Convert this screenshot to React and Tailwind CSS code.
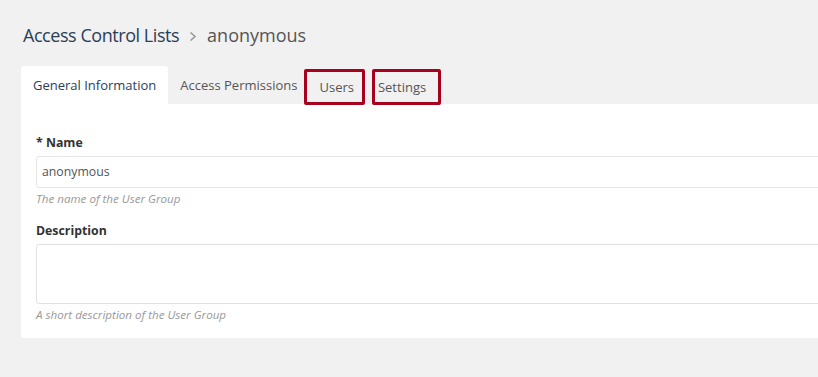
export default function App() {
  return (
    <div
      className="h-[377px] w-full overflow-hidden bg-[#f1f1f1]"
      style={{ fontFamily: '"Open Sans", "Noto Sans", sans-serif' }}
    >
      <div className="pl-[21px] pt-[22px]">
        <h1 className="flex items-center pl-[2px] text-[18px] leading-[26px]">
          <span className="tracking-[-0.45px] text-[#2b3e58]">Access Control Lists</span>
          <svg className="mx-[10px] mt-[2px]" width="8" height="11" viewBox="0 0 8 11">
            <path d="M1.5 1.5 L6 5.5 L1.5 9.5" fill="none" stroke="#999" strokeWidth="1.6" />
          </svg>
          <span className="text-[#555]">anonymous</span>
        </h1>
        <div className="mt-[18px] flex items-end text-[13px]">
          <div className="flex h-[38px] items-center rounded-t-[3px] bg-white px-[12px] pt-[2px] text-[#2b3e58]">
            General Information
          </div>
          <div className="flex h-[38px] items-center pl-[12px] pr-[7px] pt-[2px] text-[#555]">Access Permissions</div>
          <div className="mb-[-1px] flex h-[36px] items-center rounded-[2px] border-[3px] border-[#a8001f] pl-[12px] pr-[8px] pt-[1px] text-[#555]">
            Users
          </div>
          <div className="mb-[-1px] ml-[7px] flex h-[36px] items-center rounded-[2px] border-[3px] border-[#a8001f] pl-[3px] pr-[12px] pt-[1px] text-[#555]">
            Settings
          </div>
        </div>
        <div className="w-[840px] rounded-b-[3px] bg-white pl-[15px] pt-[30px] pb-[15px]">
          <div className="text-[12.3px] font-bold leading-[18px] text-[#333]">* Name</div>
          <div className="mt-[4px] flex h-[32px] items-center rounded-[3px] border border-[#e6e6e6] px-[5px] text-[12.3px] text-[#555]">
            anonymous
          </div>
          <div className="mt-[3px] text-[11.6px] italic leading-[16px] text-[#999]">The name of the User Group</div>
          <div className="mt-[15px] text-[12.3px] font-bold leading-[18px] text-[#333]">Description</div>
          <div className="mt-[4px] h-[60px] rounded-[3px] border border-[#e0e0e0]"></div>
          <div className="mt-[3px] text-[11.6px] italic leading-[16px] text-[#999]">A short description of the User Group</div>
        </div>
      </div>
    </div>
  );
}
